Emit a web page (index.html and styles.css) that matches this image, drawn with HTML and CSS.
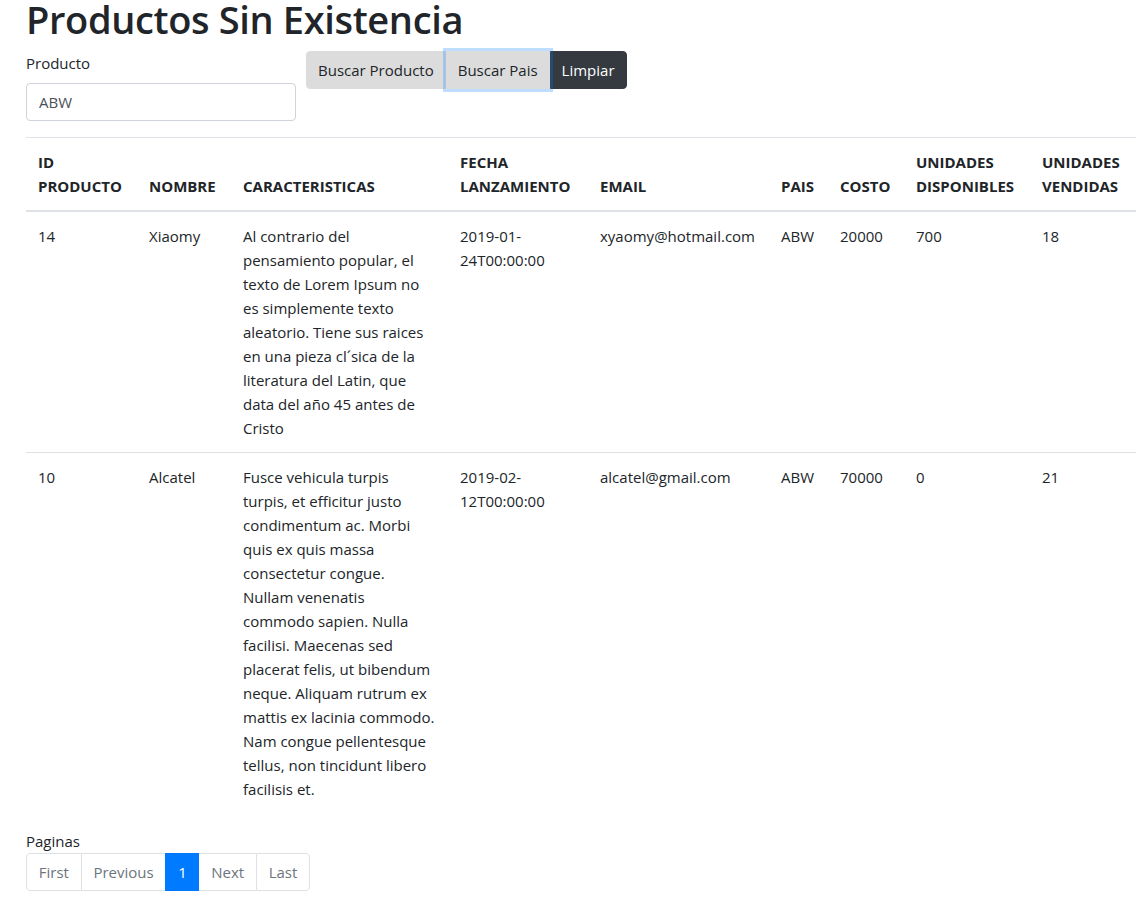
FILE: index.html
```html
<!DOCTYPE html>
<html lang="es">
<head>
<meta charset="utf-8">
<title>Productos Sin Existencia</title>
<link rel="stylesheet" href="styles.css">
</head>
<body>
<div class="container">
  <h1 class="title">Productos Sin Existencia</h1>
  <div class="search-row">
    <div class="form-group">
      <label class="label" for="producto">Producto</label>
      <input class="input" id="producto" type="text" value="ABW">
    </div>
    <div class="btn-group">
      <button class="btn btn-gray">Buscar Producto</button>
      <button class="btn btn-gray btn-focus">Buscar Pais</button>
      <button class="btn btn-dark">Limpiar</button>
    </div>
  </div>

  <table class="table">
    <colgroup>
      <col class="c-id"><col class="c-nombre"><col class="c-car"><col class="c-fecha"><col class="c-email"><col class="c-pais"><col class="c-costo"><col class="c-disp"><col class="c-vend">
    </colgroup>
    <thead>
      <tr>
        <th>ID PRODUCTO</th>
        <th>NOMBRE</th>
        <th>CARACTERISTICAS</th>
        <th>FECHA LANZAMIENTO</th>
        <th>EMAIL</th>
        <th>PAIS</th>
        <th>COSTO</th>
        <th>UNIDADES DISPONIBLES</th>
        <th>UNIDADES VENDIDAS</th>
      </tr>
    </thead>
    <tbody>
      <tr>
        <td>14</td>
        <td>Xiaomy</td>
        <td>Al contrario del pensamiento popular, el texto de Lorem Ipsum no es simplemente texto aleatorio. Tiene sus raices en una pieza cl´sica de la literatura del Latin, que data del año 45 antes de Cristo</td>
        <td>2019-01-24T00:00:00</td>
        <td>xyaomy@hotmail.com</td>
        <td>ABW</td>
        <td>20000</td>
        <td>700</td>
        <td>18</td>
      </tr>
      <tr>
        <td>10</td>
        <td>Alcatel</td>
        <td>Fusce vehicula turpis turpis, et efficitur justo condimentum ac. Morbi quis ex quis massa consectetur congue. Nullam venenatis commodo sapien. Nulla facilisi. Maecenas sed placerat felis, ut bibendum neque. Aliquam rutrum ex mattis ex lacinia commodo. Nam congue pellentesque tellus, non tincidunt libero facilisis et.</td>
        <td>2019-02-12T00:00:00</td>
        <td>alcatel@gmail.com</td>
        <td>ABW</td>
        <td>70000</td>
        <td>0</td>
        <td>21</td>
      </tr>
    </tbody>
  </table>

  <div class="pages">
    <div class="label">Paginas</div>
    <ul class="pagination">
      <li class="page-item"><span class="page-link">First</span></li>
      <li class="page-item"><span class="page-link">Previous</span></li>
      <li class="page-item active"><span class="page-link">1</span></li>
      <li class="page-item"><span class="page-link">Next</span></li>
      <li class="page-item"><span class="page-link">Last</span></li>
    </ul>
  </div>
</div>
</body>
</html>
```

FILE: styles.css
```css
* { box-sizing: border-box; }

body {
  margin: 0;
  font-family: "Open Sans", "Noto Sans", sans-serif;
  font-size: 15px;
  line-height: 24px;
  color: #212529;
  background: #fff;
}

.container {
  width: 1110px;
  margin-left: 26px;
}

.title {
  margin: 0 0 12px;
  font-size: 38px;
  line-height: 39px;
  font-weight: 600;
  letter-spacing: -0.35px;
}

.search-row {
  display: flex;
  align-items: flex-start;
  gap: 10px;
}

.form-group {
  width: 270px;
  margin-bottom: 16px;
}

.label {
  display: inline-block;
  margin-bottom: 8px;
}

.input {
  display: block;
  width: 100%;
  height: 38px;
  padding: 6px 12px;
  font-family: inherit;
  font-size: 15px;
  line-height: 24px;
  color: #495057;
  background: #fff;
  border: 1px solid #ced4da;
  border-radius: 4px;
}

.btn-group {
  display: flex;
}

.btn {
  height: 38px;
  padding: 6px 11px;
  font-family: inherit;
  font-size: 15px;
  line-height: 24px;
  border: 1px solid transparent;
  border-radius: 0;
  cursor: pointer;
}

.btn:first-child { border-radius: 4px 0 0 4px; }
.btn:last-child { border-radius: 0 4px 4px 0; }

.btn-gray {
  background: #dcdcdc;
  border-color: #dcdcdc;
  color: #212529;
}

.btn-focus {
  position: relative;
  z-index: 1;
  box-shadow: 0 0 0 3px rgba(0, 123, 255, 0.25);
}

.btn-dark {
  background: #343a40;
  border-color: #343a40;
  color: #fff;
}

.table {
  width: 1110px;
  table-layout: fixed;
  border-collapse: collapse;
  margin-bottom: 16px;
}

.c-id { width: 111px; }
.c-nombre { width: 94px; }
.c-car { width: 217px; }
.c-fecha { width: 140px; }
.c-email { width: 181px; }
.c-pais { width: 59px; }
.c-costo { width: 76px; }
.c-disp { width: 126px; }
.c-vend { width: 106px; }

.table th,
.table td {
  padding: 12px;
  text-align: left;
  border-top: 1px solid #dee2e6;
}

.table th {
  vertical-align: bottom;
  font-weight: 700;
  border-bottom: 2px solid #dee2e6;
}

.table td {
  vertical-align: top;
}

.table tbody tr:first-child td {
  border-top: 0;
}

.pages .label {
  display: block;
  margin-bottom: 0;
}

.pagination {
  display: flex;
  list-style: none;
  margin: 0;
  padding: 0;
}

.page-link {
  display: block;
  padding: 8px 11.75px;
  line-height: 20px;
  color: #6c757d;
  background: #fff;
  border: 1px solid #dee2e6;
  margin-left: -1px;
}

.page-item:first-child .page-link {
  margin-left: 0;
  border-radius: 4px 0 0 4px;
}

.page-item:last-child .page-link {
  border-radius: 0 4px 4px 0;
}

.page-item.active .page-link {
  position: relative;
  z-index: 1;
  color: #fff;
  background: #007bff;
  border-color: #007bff;
}
```
